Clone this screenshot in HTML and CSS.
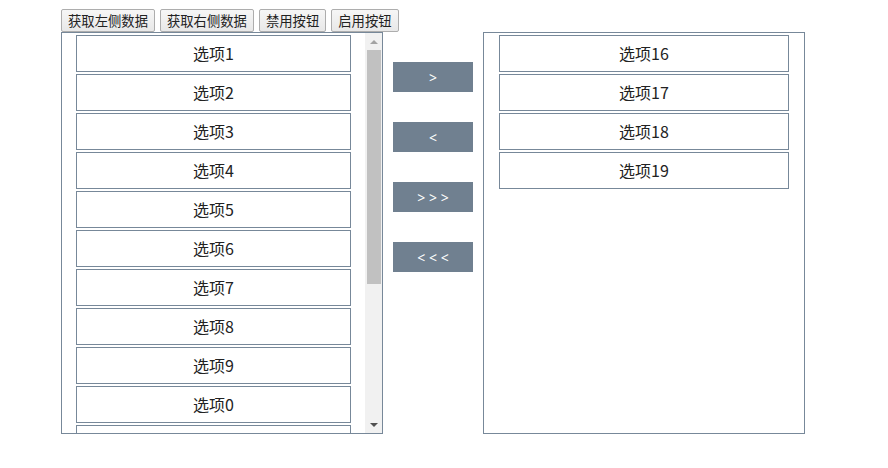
FILE: index.html
```html
<!DOCTYPE html>
<html lang="zh-CN">
<head>
    <meta charset="UTF-8">
    <meta name="viewport" content="width=device-width, initial-scale=1.0">
    <title>穿梭框</title>
    <link rel="stylesheet" href="styles.css">
</head>
<body>

    <div class="wrap">
        <div class="toolbar">
            <button>获取左侧数据</button>
            <button>获取右侧数据</button>
            <button>禁用按钮</button>
            <button>启用按钮</button>
        </div>

        <div class="transfer">
            <div class="box left">
                <div class="list">
                    <div class="item">选项1</div>
                    <div class="item">选项2</div>
                    <div class="item">选项3</div>
                    <div class="item">选项4</div>
                    <div class="item">选项5</div>
                    <div class="item">选项6</div>
                    <div class="item">选项7</div>
                    <div class="item">选项8</div>
                    <div class="item">选项9</div>
                    <div class="item">选项0</div>
                    <div class="item">选项10</div>
                    <div class="item">选项11</div>
                    <div class="item">选项12</div>
                    <div class="item">选项13</div>
                    <div class="item">选项14</div>
                    <div class="item">选项15</div>
                </div>
                <!-- 滚动条 -->
                <div class="scrollbar">
                    <span class="arrow up"></span>
                    <div class="track"><div class="thumb"></div></div>
                    <span class="arrow down"></span>
                </div>
            </div>

            <div class="actions">
                <button class="move">&gt;</button>
                <button class="move">&lt;</button>
                <button class="move">&gt; &gt; &gt;</button>
                <button class="move">&lt; &lt; &lt;</button>
            </div>

            <div class="box right">
                <div class="item">选项16</div>
                <div class="item">选项17</div>
                <div class="item">选项18</div>
                <div class="item">选项19</div>
            </div>
        </div>
    </div>

</body>
</html>
```

FILE: styles.css
```css
body {
    margin: 8px;
    font-family: "Noto Sans CJK SC", "Noto Sans", sans-serif;
    background: #fff;
    color: #222;
}
.wrap {
    margin-left: 53px;
}
.toolbar {
    display: flex;
    gap: 5px;
    margin-top: 1px;
}
.toolbar button {
    font-family: "Noto Sans CJK SC", sans-serif;
    font-size: 13.33px;
    height: 23px;
    line-height: 19px;
    padding: 0 6px;
    color: #222;
    background: linear-gradient(#f6f6f6, #e8e8e8);
    border: 1px solid #adadad;
    border-radius: 2px;
}
.transfer {
    display: flex;
}
.box {
    width: 320px;
    height: 400px;
    border: 1px solid #778899;
}
.left {
    display: flex;
}
.list {
    flex: 1;
    overflow: hidden;
    padding-top: 1px;
}
.right {
    padding-top: 1px;
    height: 399px;
}
.item {
    width: 90%;
    height: 35px;
    margin: 1px auto 2px;
    border: 1px solid #778899;
    font-size: 16px;
    line-height: 35px;
    text-align: center;
}
.scrollbar {
    width: 17px;
    display: flex;
    flex-direction: column;
    background: #f1f1f1;
}
.track {
    flex: 1;
}
.thumb {
    height: 234px;
    margin: 0 1px 0 2px;
    background: #c1c1c1;
}
.arrow {
    height: 17px;
    display: flex;
    align-items: center;
    justify-content: center;
}
.arrow::before {
    content: "";
    border-left: 4px solid transparent;
    border-right: 4px solid transparent;
}
.up::before {
    border-bottom: 4px solid #a3a3a3;
}
.down::before {
    border-top: 4px solid #505050;
}
.actions {
    width: 100px;
    padding-top: 30px;
    display: flex;
    flex-direction: column;
    align-items: center;
    gap: 30px;
}
.move {
    width: 80px;
    height: 30px;
    border: none;
    background-color: #708090;
    color: #fff;
    font-family: "Noto Sans", sans-serif;
    font-size: 14px;
    padding: 0;
}
```
